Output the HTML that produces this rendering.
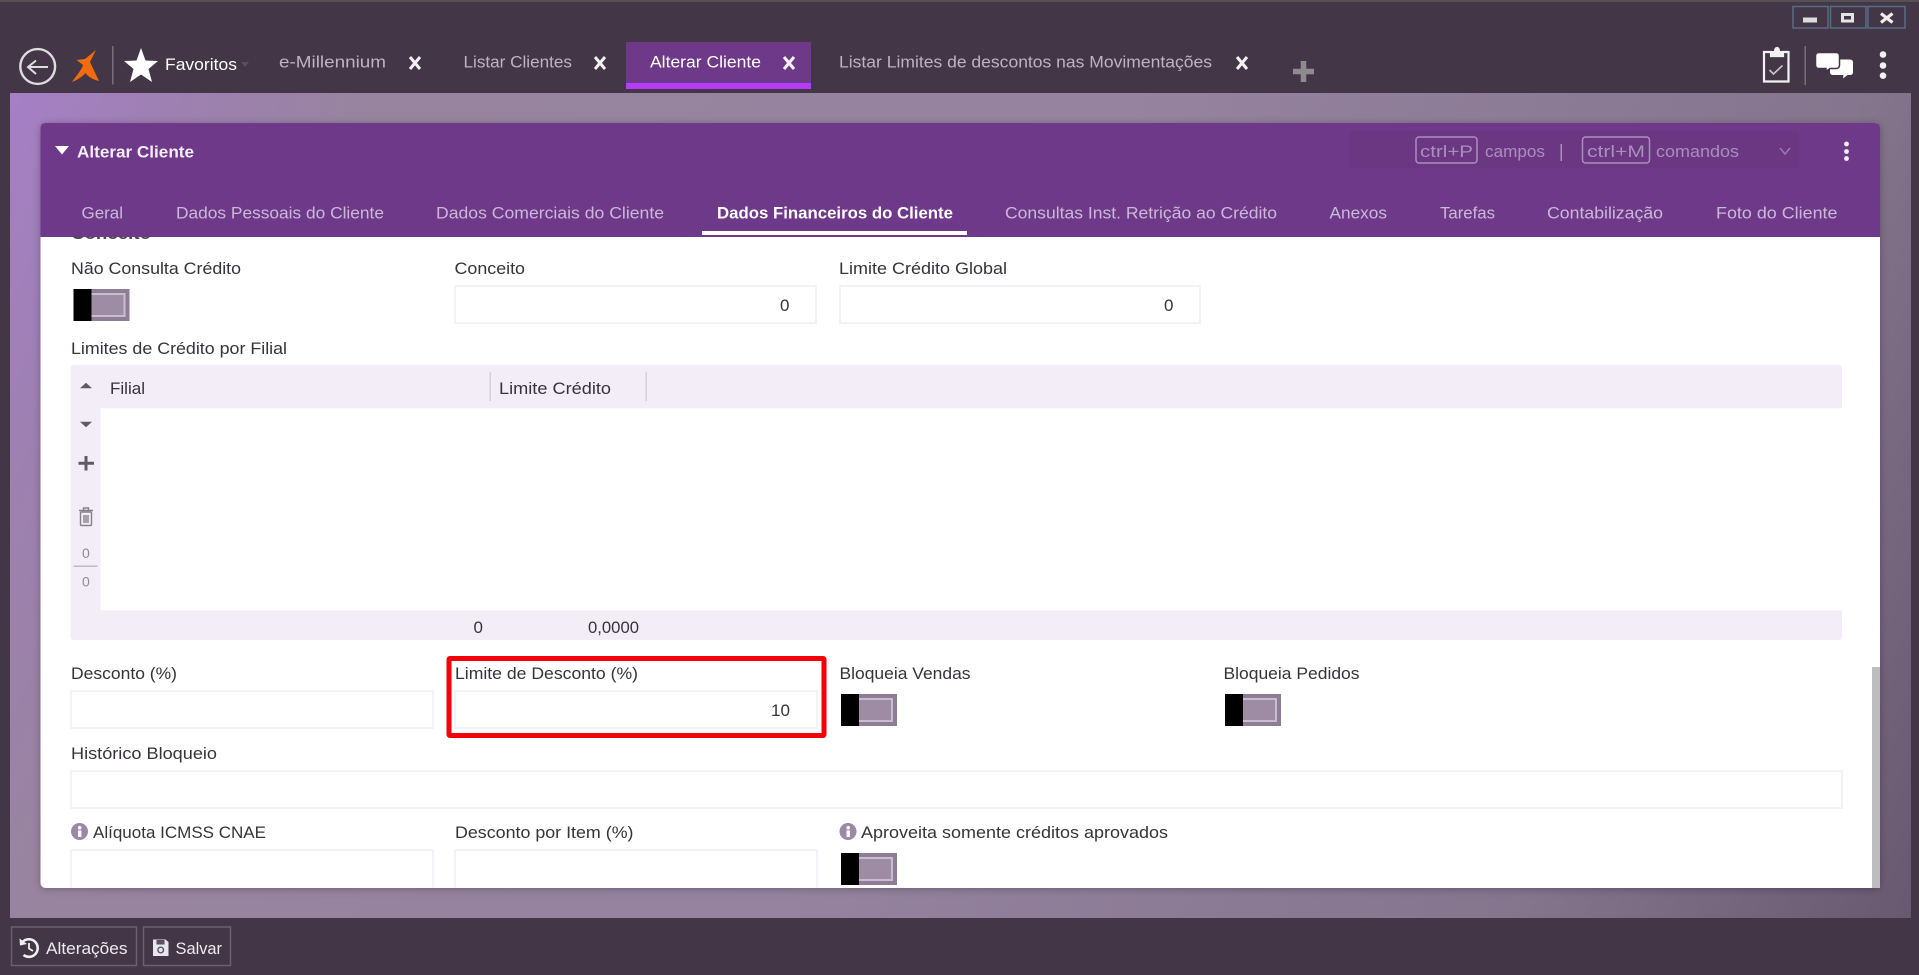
<!DOCTYPE html>
<html lang="pt">
<head>
<meta charset="utf-8">
<title>Alterar Cliente</title>
<style>
html,body{margin:0;padding:0;background:#433647;width:1919px;height:975px;overflow:hidden}
svg{display:block;filter:blur(.35px)}
text{font-family:"Liberation Sans",sans-serif;font-size:17px;fill:#3c3640}
.w{fill:#fff}
.tab{fill:#c9b9d6}
.top{fill:#bdb4c1}
.lbl{fill:#37323c}
.g{fill:#8f8a94;font-size:14px}
.m{fill:#a98fbc}
</style>
</head>
<body>
<svg width="1919" height="975" viewBox="0 0 1919 975" xmlns="http://www.w3.org/2000/svg">
<defs>
<linearGradient id="bg" gradientUnits="userSpaceOnUse" x1="10" y1="93" x2="1911" y2="918">
<stop offset="0" stop-color="#a67fc6"/>
<stop offset=".07" stop-color="#9e80b2"/>
<stop offset=".16" stop-color="#98849f"/>
<stop offset=".5" stop-color="#95839f"/>
<stop offset=".82" stop-color="#85758d"/>
<stop offset="1" stop-color="#685870"/>
</linearGradient>
<filter id="s" x="-3%" y="-3%" width="106%" height="106%"><feDropShadow dx="0" dy="1" stdDeviation="4" flood-color="#000" flood-opacity=".28"/></filter>
<clipPath id="body"><rect x="40" y="237" width="1840" height="651"/></clipPath>
<g id="tog">
<rect x="18" y="0" width="38" height="32" fill="#8f7d98"/>
<rect x="18" y="4" width="33" height="24" fill="#9d8ca4"/>
<path d="M18 5 H51 V27 H18" fill="none" stroke="#c7bdce" stroke-width="2"/>
<rect x="0" y="0" width="18" height="32" fill="#000"/>
</g>
<g id="info">
<circle cx="8.5" cy="8.5" r="8.5" fill="#9a88a4"/>
<rect x="7" y="7.5" width="3.4" height="6.5" fill="#fff"/>
<circle cx="8.7" cy="4.7" r="1.8" fill="#fff"/>
</g>
</defs>

<!-- frame -->
<rect width="1919" height="975" fill="#433647"/>
<rect width="1919" height="2" fill="#555052"/>
<rect x="10" y="93" width="1901" height="825" fill="url(#bg)"/>

<!-- window buttons -->
<g fill="none" stroke="#586c86" stroke-width="1.5">
<rect x="1793" y="6.5" width="35" height="21.5"/>
<rect x="1830.5" y="6.5" width="35.5" height="21.5"/>
<rect x="1868" y="6.5" width="37" height="21.5"/>
</g>
<rect x="1803" y="17.5" width="14" height="5" fill="#ddd"/>
<rect x="1842.5" y="14.5" width="10" height="6.5" fill="none" stroke="#e4e4e4" stroke-width="3"/>
<path d="M1881 13.5 L1892.5 22.5 M1892.5 13.5 L1881 22.5" stroke="#eee" stroke-width="3.2"/>

<!-- left icons -->
<circle cx="37.7" cy="66.5" r="17.4" fill="none" stroke="#ddd" stroke-width="2.4"/>
<path d="M48 67 H28 M36 60.5 L28 67 L36 74" fill="none" stroke="#ddd" stroke-width="2"/>
<path d="M96 50 L90 62 L99 81 C94 80 88 77 85.5 73 C82 77 77 80 72 82 C76 76 81 71 83 65 L76.5 60 L85 59 Z" fill="#f26b0c"/>
<rect x="112" y="46" width="1.5" height="38.5" fill="#77707c"/>
<path d="M141 48 L145.5 60.5 L158 61 L148.5 69 L152 82 L141 74.5 L130 82 L133.5 69 L124 61 L136.5 60.5 Z" fill="#fff"/>
<text x="165" y="70" textLength="72" lengthAdjust="spacingAndGlyphs" class="w">Favoritos</text>
<path d="M241 62 l8 0 l-4 5z" fill="#5a4f5f"/>

<!-- app tabs -->
<rect x="626" y="42" width="185" height="47" fill="#6f3989"/>
<rect x="626" y="83" width="185" height="6" fill="#b63cf5"/>
<text x="279" y="67.5" textLength="107" lengthAdjust="spacingAndGlyphs" class="top">e-Millennium</text>
<text x="463.5" y="67.5" textLength="108.5" lengthAdjust="spacingAndGlyphs" class="top">Listar Clientes</text>
<text x="650" y="67.5" textLength="111" lengthAdjust="spacingAndGlyphs" class="w">Alterar Cliente</text>
<text x="839" y="67.5" textLength="373" lengthAdjust="spacingAndGlyphs" class="top">Listar Limites de descontos nas Movimentações</text>
<g stroke="#f2f2f2" stroke-width="3" fill="none">
<path d="M410 57 L420 69 M420 57 L410 69"/>
<path d="M595 57 L605 69 M605 57 L595 69"/>
<path d="M784 57 L794 69 M794 57 L784 69"/>
<path d="M1237 57 L1247 69 M1247 57 L1237 69"/>
</g>
<path d="M1303.5 61 V82 M1293 71.5 H1314" stroke="#8e8a8e" stroke-width="5.5"/>

<!-- right icons -->
<path d="M1764 52 H1771 V56 H1783 V52 H1788.5 V81.5 H1764 Z" fill="none" stroke="#f2f2f2" stroke-width="2.2"/>
<path d="M1771.5 55 V51 H1774 C1774 45.5 1780 45.5 1780 51 H1782.5 V55 Z" fill="#f2f2f2"/>
<path d="M1769.5 70 L1773.5 74 L1782.5 65.5" fill="none" stroke="#c9c9c9" stroke-width="1.6"/>
<rect x="1804.5" y="46" width="1.5" height="39" fill="#77707c"/>
<path d="M1833 59.5 H1850 Q1853 59.5 1853 62.5 V72 Q1853 75 1850 75 H1847.5 L1843 78.5 L1843.5 75 H1833 Q1830 75 1830 72 V62.5 Q1830 59.5 1833 59.5 Z" fill="#fff"/>
<path d="M1819 52.5 H1836 Q1839.5 52.5 1839.5 56 V65 Q1839.5 68.5 1836 68.5 H1830 L1826 71.5 V68.5 H1819 Q1815.5 68.5 1815.5 65 V56 Q1815.5 52.5 1819 52.5 Z" fill="#fff" stroke="#433647" stroke-width="1.5"/>
<circle cx="1883" cy="54.5" r="3.3" fill="#f2f2f2"/><circle cx="1883" cy="65.5" r="3.3" fill="#f2f2f2"/><circle cx="1883" cy="75.7" r="3.3" fill="#f2f2f2"/>

<!-- card -->
<g filter="url(#s)">
<rect x="40.5" y="123" width="1839.5" height="765" rx="5" fill="#fff"/>
</g>
<path d="M40.5 237 V128 Q40.5 123 45.5 123 H1875 Q1880 123 1880 128 V237 Z" fill="#6f3989"/>
<path d="M55 146 H69 L62 154.5 Z" fill="#fff"/>
<text x="77" y="157.5" textLength="117" lengthAdjust="spacingAndGlyphs" class="w" style="font-weight:700;font-size:16.5px;fill:#f4eef7">Alterar Cliente</text>

<rect x="1349" y="131" width="450.5" height="37" rx="4" fill="#6b3783"/>
<rect x="1416" y="137" width="61" height="26" rx="3" fill="none" stroke="#a98fbc" stroke-width="1.5"/>
<rect x="1582.5" y="137" width="67" height="26" rx="3" fill="none" stroke="#a98fbc" stroke-width="1.5"/>
<text x="1420" y="157" textLength="53" lengthAdjust="spacingAndGlyphs" class="m">ctrl+P</text>
<text x="1485" y="157" textLength="60" lengthAdjust="spacingAndGlyphs" class="m">campos</text>
<rect x="1560.5" y="144" width="1.5" height="17" fill="#a98fbc"/>
<text x="1587" y="157" textLength="58" lengthAdjust="spacingAndGlyphs" class="m">ctrl+M</text>
<text x="1656" y="157" textLength="83" lengthAdjust="spacingAndGlyphs" class="m">comandos</text>
<path d="M1780 148 L1785 154 L1790 148" fill="none" stroke="#9a78ae" stroke-width="1.6"/>
<circle cx="1846.5" cy="144" r="2.4" fill="#f2f2f2"/><circle cx="1846.5" cy="151.5" r="2.4" fill="#f2f2f2"/><circle cx="1846.5" cy="158.5" r="2.4" fill="#f2f2f2"/>

<!-- card tabs -->
<g>
<text x="81.5" y="218.5" textLength="41.5" lengthAdjust="spacingAndGlyphs" class="tab">Geral</text>
<text x="176" y="218.5" textLength="208" lengthAdjust="spacingAndGlyphs" class="tab">Dados Pessoais do Cliente</text>
<text x="436" y="218.5" textLength="228" lengthAdjust="spacingAndGlyphs" class="tab">Dados Comerciais do Cliente</text>
<text x="717" y="218.5" textLength="236" lengthAdjust="spacingAndGlyphs" class="w" style="font-weight:700">Dados Financeiros do Cliente</text>
<text x="1005" y="218.5" textLength="272" lengthAdjust="spacingAndGlyphs" class="tab">Consultas Inst. Retrição ao Crédito</text>
<text x="1329.5" y="218.5" textLength="57.5" lengthAdjust="spacingAndGlyphs" class="tab">Anexos</text>
<text x="1440" y="218.5" textLength="55" lengthAdjust="spacingAndGlyphs" class="tab">Tarefas</text>
<text x="1547" y="218.5" textLength="116" lengthAdjust="spacingAndGlyphs" class="tab">Contabilização</text>
<text x="1716" y="218.5" textLength="121.5" lengthAdjust="spacingAndGlyphs" class="tab">Foto do Cliente</text>
</g>
<rect x="702" y="231" width="265" height="4" fill="#fff"/>

<!-- form content -->
<g clip-path="url(#body)">
<text x="71" y="239" textLength="80" lengthAdjust="spacingAndGlyphs" style="font-weight:700;fill:#4a4550">Conceito</text>

<text x="71" y="274" textLength="170" lengthAdjust="spacingAndGlyphs" class="lbl">Não Consulta Crédito</text>
<text x="454.5" y="274" textLength="70.5" lengthAdjust="spacingAndGlyphs" class="lbl">Conceito</text>
<text x="839" y="274" textLength="168" lengthAdjust="spacingAndGlyphs" class="lbl">Limite Crédito Global</text>
<use href="#tog" x="73.5" y="289"/>
<g fill="#fff" stroke="#f4f1f8" stroke-width="2">
<rect x="455" y="286" width="361" height="37"/>
<rect x="840" y="286" width="360" height="37"/>
</g>
<text x="780" y="311" class="lbl">0</text>
<text x="1164" y="311" class="lbl">0</text>

<text x="71" y="354" textLength="216" lengthAdjust="spacingAndGlyphs" class="lbl">Limites de Crédito por Filial</text>

<!-- grid -->
<rect x="70.5" y="365" width="1771.5" height="275" rx="3" fill="#f2edf7"/>
<rect x="100.5" y="408.3" width="1741.5" height="202" fill="#fff"/>
<rect x="489.5" y="372" width="1.5" height="29" fill="#d4d0d8"/>
<rect x="645.5" y="372" width="1.5" height="29" fill="#d4d0d8"/>
<text x="110" y="394" textLength="35" lengthAdjust="spacingAndGlyphs" class="lbl">Filial</text>
<text x="499" y="394" textLength="112" lengthAdjust="spacingAndGlyphs" class="lbl">Limite Crédito</text>
<path d="M80 388.3 H92 L86 382.7 Z M80 421.7 H92 L86 427.3 Z" fill="#5e5964"/>
<path d="M86 456 V470.5 M78.5 463.3 H94" stroke="#5e5964" stroke-width="3"/>
<g fill="none" stroke="#85808a" stroke-width="1.4">
<rect x="80.5" y="512" width="11" height="13.5" rx="1"/>
<path d="M79 510.5 H93 M83.5 510.5 V508 H88.5 V510.5 M84 515 V523 M86 515 V523 M88 515 V523"/>
</g>
<text x="82" y="558" class="g">0</text>
<rect x="73.5" y="565.5" width="24" height="1.5" fill="#bdb9c2"/>
<text x="82" y="586.5" class="g">0</text>
<text x="473.5" y="633" class="lbl">0</text>
<text x="588" y="633" textLength="51" lengthAdjust="spacingAndGlyphs" class="lbl">0,0000</text>

<!-- row 2 -->
<text x="71" y="679" textLength="106" lengthAdjust="spacingAndGlyphs" class="lbl">Desconto (%)</text>
<text x="455" y="679" textLength="183" lengthAdjust="spacingAndGlyphs" class="lbl">Limite de Desconto (%)</text>
<text x="839.5" y="679" textLength="131" lengthAdjust="spacingAndGlyphs" class="lbl">Bloqueia Vendas</text>
<text x="1223.5" y="679" textLength="136" lengthAdjust="spacingAndGlyphs" class="lbl">Bloqueia Pedidos</text>
<g fill="#fff" stroke="#f4f1f8" stroke-width="2">
<rect x="71" y="691" width="362" height="37"/>
<rect x="455" y="691" width="362" height="37"/>
<rect x="71" y="771" width="1771" height="37"/>
<rect x="71" y="850" width="362" height="60"/>
<rect x="455" y="850" width="362" height="60"/>
</g>
<text x="771" y="716" textLength="19" lengthAdjust="spacingAndGlyphs" class="lbl">10</text>
<use href="#tog" x="841" y="694"/>
<use href="#tog" x="1225" y="694"/>
<rect x="449" y="658.5" width="375" height="77" fill="none" stroke="#f40006" stroke-width="5" rx="1"/>

<text x="71" y="759" textLength="146" lengthAdjust="spacingAndGlyphs" class="lbl">Histórico Bloqueio</text>

<use href="#info" x="71" y="823"/>
<text x="93" y="838" textLength="173" lengthAdjust="spacingAndGlyphs" class="lbl">Alíquota ICMSS CNAE</text>
<text x="455" y="838" textLength="178.5" lengthAdjust="spacingAndGlyphs" class="lbl">Desconto por Item (%)</text>
<use href="#info" x="839.5" y="823"/>
<text x="861" y="838" textLength="307" lengthAdjust="spacingAndGlyphs" class="lbl">Aproveita somente créditos aprovados</text>
<use href="#tog" x="841" y="853"/>
<rect x="1872" y="667" width="8" height="221" fill="#bdbdbd"/>
</g>

<!-- bottom buttons -->
<g fill="none" stroke="#6b5f70" stroke-width="1.5">
<rect x="11.5" y="927" width="125" height="38.5"/>
<rect x="143.5" y="927" width="87" height="38.5"/>
</g>
<path d="M22.5 942 A8.8 8.8 0 1 1 23.5 955" fill="none" stroke="#f0f0f0" stroke-width="2.6"/>
<path d="M19.5 938.5 L27 944 L20 945.5 Z" fill="#f0f0f0"/>
<path d="M29 943 V948.5 L33 951" fill="none" stroke="#f0f0f0" stroke-width="1.8"/>
<path d="M153 939.5 H165.5 L168.5 942 V956 H153 Z" fill="#e6e6ee"/>
<rect x="156.5" y="940" width="8" height="4.5" fill="#5b5060"/>
<circle cx="160.7" cy="950" r="2.8" fill="none" stroke="#5b5060" stroke-width="1.4"/>
<text x="46" y="954" textLength="81.5" lengthAdjust="spacingAndGlyphs" class="w" style="fill:#ecebf0">Alterações</text>
<text x="175.5" y="954" textLength="46.5" lengthAdjust="spacingAndGlyphs" class="w" style="fill:#ecebf0">Salvar</text>
</svg>
</body>
</html>
